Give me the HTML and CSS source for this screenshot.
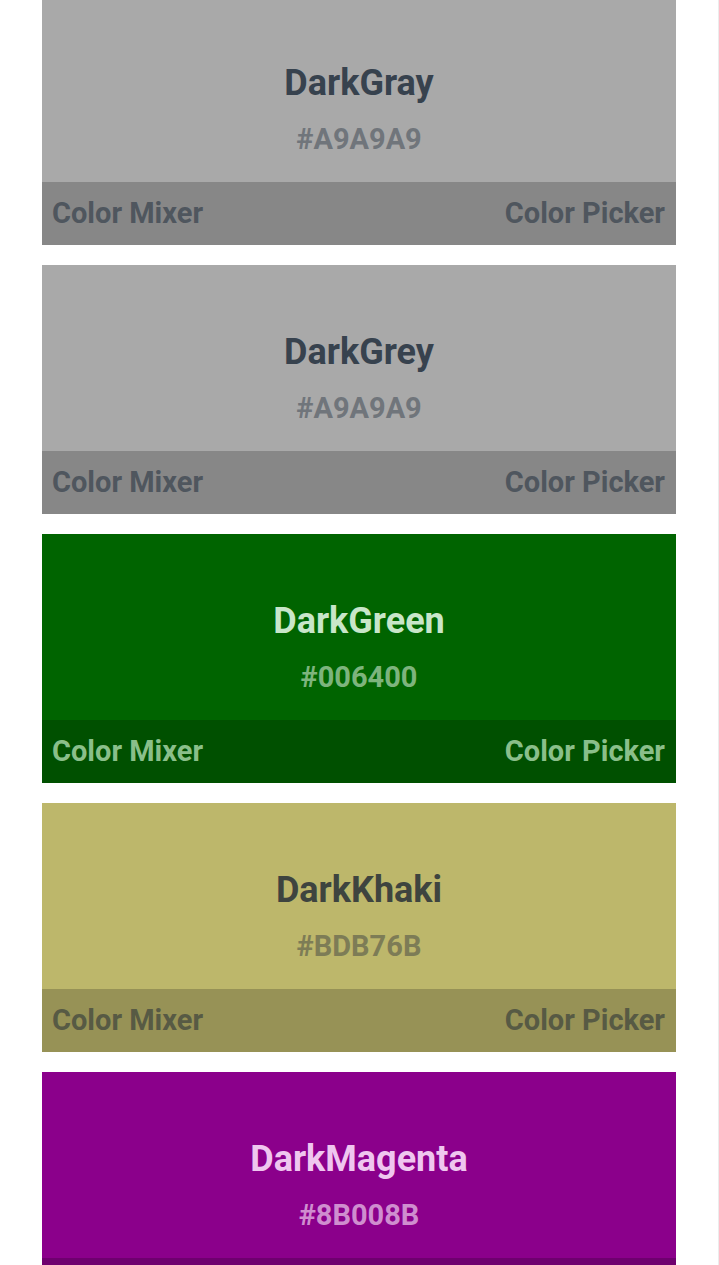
FILE: index.html
```html
<!DOCTYPE html>
<html lang="en">
<head>
<meta charset="utf-8">
<title>Colors</title>
<link rel="stylesheet" href="styles.css">
</head>
<body>
<div class="page">
  <div class="list">
    <div class="card c-darkgray">
      <div class="swatch">
        <div class="name">DarkGray</div>
        <div class="hex">#A9A9A9</div>
      </div>
      <div class="bar"><span>Color Mixer</span><span>Color Picker</span></div>
    </div>
    <div class="card c-darkgray">
      <div class="swatch">
        <div class="name">DarkGrey</div>
        <div class="hex">#A9A9A9</div>
      </div>
      <div class="bar"><span>Color Mixer</span><span>Color Picker</span></div>
    </div>
    <div class="card c-darkgreen">
      <div class="swatch">
        <div class="name">DarkGreen</div>
        <div class="hex">#006400</div>
      </div>
      <div class="bar"><span>Color Mixer</span><span>Color Picker</span></div>
    </div>
    <div class="card c-darkkhaki">
      <div class="swatch">
        <div class="name">DarkKhaki</div>
        <div class="hex">#BDB76B</div>
      </div>
      <div class="bar"><span>Color Mixer</span><span>Color Picker</span></div>
    </div>
    <div class="card c-darkmagenta">
      <div class="swatch">
        <div class="name">DarkMagenta</div>
        <div class="hex">#8B008B</div>
      </div>
      <div class="bar"><span>Color Mixer</span><span>Color Picker</span></div>
    </div>
  </div>
</div>
</body>
</html>
```
FILE: styles.css
```css
html, body {
  margin: 0;
  padding: 0;
  background: #ffffff;
  overflow: hidden;
}
body {
  font-family: Roboto, "Liberation Sans", sans-serif;
}
.page {
  width: 718px;
  height: 1265px;
  border-right: 1px solid #ececec;
  overflow: hidden;
}
.list {
  display: flex;
  flex-direction: column;
  gap: 20px;
  margin-top: -4px;
  padding: 0 42px 0 42px;
}
.card {
  display: flex;
  flex-direction: column;
  height: 249px;
  flex-shrink: 0;
  background: var(--bg);
}
.swatch {
  height: 186px;
  display: flex;
  flex-direction: column;
  align-items: center;
  padding-top: 65px;
  box-sizing: border-box;
}
.name {
  font-size: 36px;
  font-weight: 700;
  line-height: 44px;
  color: var(--name);
}
.hex {
  margin-top: 17px;
  font-size: 29px;
  font-weight: 700;
  line-height: 34px;
  color: var(--hex);
}
.bar {
  height: 63px;
  display: flex;
  align-items: center;
  justify-content: space-between;
  padding: 0 11px 2px 10px;
  box-sizing: border-box;
  background: var(--bar);
  font-size: 29px;
  font-weight: 700;
  color: var(--bartext);
}
.c-darkgray {
  --bg: #a9a9a9;
  --bar: #878787;
  --name: #37424e;
  --hex: #70757b;
  --bartext: #4f565e;
}
.c-darkgreen {
  --bg: #006400;
  --bar: #005000;
  --name: #c8e6c9;
  --hex: #7db47d;
  --bartext: #8abf8a;
}
.c-darkkhaki {
  --bg: #bdb76b;
  --bar: #979256;
  --name: #3e443f;
  --hex: #7d7c56;
  --bartext: #575a44;
}
.c-darkmagenta {
  --bg: #8b008b;
  --bar: #6f006f;
  --name: #efc6ef;
  --hex: #cf8ecf;
  --bartext: #d39cd3;
}
```
